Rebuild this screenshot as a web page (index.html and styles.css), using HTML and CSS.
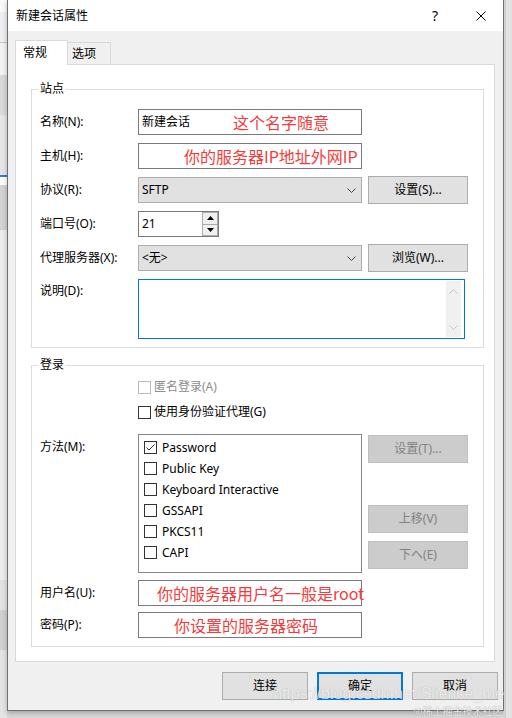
FILE: index.html
```html
<!DOCTYPE html>
<html lang="zh-CN">
<head>
<meta charset="utf-8">
<title>新建会话属性</title>
<link rel="stylesheet" href="styles.css">
</head>
<body>
<div class="screen">
  <div class="bg-left">
    <div class="band b1"></div>
    <div class="band b2"></div>
    <div class="band b3"></div>
    <div class="band b4"></div>
    <div class="band b5"></div>
    <div class="band b6"></div>
    <div class="band b7"></div>
    <div class="band b8"></div>
    <div class="band b9"></div>
    <div class="band b10"></div>
    <div class="band b11"></div>
    <div class="band b12"></div>
    <div class="band b13"></div>
  </div>

  <div class="dialog">
    <div class="titlebar">
      <span class="title">新建会话属性</span>
      <span class="help">?</span>
      <span class="close"><svg width="10" height="10" viewBox="0 0 10 10"><path d="M0.5 0.5L9.5 9.5M9.5 0.5L0.5 9.5" stroke="#000" stroke-width="1" fill="none"/></svg></span>
    </div>

    <div class="body">
      <div class="tabs">
        <div class="tab active">常规</div>
        <div class="tab">选项</div>
      </div>

      <div class="panel">
        <fieldset class="group group-site">
          <legend>站点</legend>
          <div class="row">
            <span class="label">名称(N):</span>
            <div class="field"><span class="val">新建会话</span><span class="note note-name">这个名字随意</span></div>
          </div>
          <div class="row">
            <span class="label">主机(H):</span>
            <div class="field"><span class="note note-host">你的服务器IP地址外网IP</span></div>
          </div>
          <div class="row">
            <span class="label">协议(R):</span>
            <div class="select"><span>SFTP</span><svg width="9" height="5" viewBox="0 0 9 5"><path d="M0.5 0.5L4.5 4.5L8.5 0.5" stroke="#444" fill="none"/></svg></div>
            <div class="btn">设置(S)...</div>
          </div>
          <div class="row">
            <span class="label">端口号(O):</span>
            <div class="spin">
              <span class="val">21</span>
              <div class="spin-btns">
                <div class="sb"><svg width="7" height="4" viewBox="0 0 7 4"><polygon points="0,4 3.5,0 7,4" fill="#000"/></svg></div>
                <div class="sb"><svg width="7" height="4" viewBox="0 0 7 4"><polygon points="0,0 7,0 3.5,4" fill="#000"/></svg></div>
              </div>
            </div>
          </div>
          <div class="row">
            <span class="label">代理服务器(X):</span>
            <div class="select"><span>&lt;无&gt;</span><svg width="9" height="5" viewBox="0 0 9 5"><path d="M0.5 0.5L4.5 4.5L8.5 0.5" stroke="#444" fill="none"/></svg></div>
            <div class="btn">浏览(W)...</div>
          </div>
          <div class="row row-top last">
            <span class="label label-top">说明(D):</span>
            <div class="memo">
              <div class="vscroll">
                <svg width="9" height="5" viewBox="0 0 9 5"><path d="M0.5 4.5L4.5 0.5L8.5 4.5" stroke="#c4c4c4" fill="none"/></svg>
                <svg width="9" height="5" viewBox="0 0 9 5"><path d="M0.5 0.5L4.5 4.5L8.5 0.5" stroke="#c4c4c4" fill="none"/></svg>
              </div>
            </div>
          </div>
        </fieldset>

        <fieldset class="group group-login">
          <legend>登录</legend>
          <div class="check-row">
            <span class="cb cb-dis"></span><span class="dis-text">匿名登录(A)</span>
          </div>
          <div class="check-row check-row-2">
            <span class="cb"></span><span>使用身份验证代理(G)</span>
          </div>
          <div class="row-method">
            <span class="label label-method">方法(M):</span>
            <div class="listbox">
              <div class="item"><span class="cb"><svg width="11" height="11" viewBox="0 0 11 11"><path d="M1.5 5.5L4 8L9.5 2.5" stroke="#333" stroke-width="1" fill="none"/></svg></span><span>Password</span></div>
              <div class="item"><span class="cb"></span><span>Public Key</span></div>
              <div class="item"><span class="cb"></span><span>Keyboard Interactive</span></div>
              <div class="item"><span class="cb"></span><span>GSSAPI</span></div>
              <div class="item"><span class="cb"></span><span>PKCS11</span></div>
              <div class="item"><span class="cb"></span><span>CAPI</span></div>
            </div>
            <div class="side-btns">
              <div class="btn btn-dis">设置(T)...</div>
              <div class="btn btn-dis btn-up">上移(V)</div>
              <div class="btn btn-dis btn-down">下へ(E)</div>
            </div>
          </div>
          <div class="row row-user">
            <span class="label">用户名(U):</span>
            <div class="field"><span class="note note-user">你的服务器用户名一般是root</span></div>
          </div>
          <div class="row last">
            <span class="label">密码(P):</span>
            <div class="field"><span class="note note-pass">你设置的服务器密码</span></div>
          </div>
        </fieldset>
      </div>

      <div class="footer">
        <div class="fbtn">连接</div>
        <div class="fbtn primary">确定</div>
        <div class="fbtn">取消</div>
      </div>
    </div>
  </div>

  <div class="bg-right"></div>

  <div class="watermark">https://blog.csdn.net/Slience_me</div>
  <div class="watermark2">@稀土掘金技术社区</div>
</div>
</body>
</html>
```

FILE: styles.css
```css
* { box-sizing: border-box; }
html, body { margin: 0; padding: 0; }
body {
  width: 512px;
  height: 718px;
  overflow: hidden;
  background: #dcdcdc;
  font-family: "Noto Sans", "Noto Sans CJK SC", sans-serif;
  font-size: 12px;
  line-height: 16px;
  color: #000;
}
.screen {
  position: relative;
  display: flex;
  align-items: flex-start;
  width: 512px;
  height: 718px;
  background: #d8d8d8;
}

/* background window on the left */
.bg-left { width: 7px; height: 718px; flex: none; display: flex; flex-direction: column; }
.band { flex: none; }
.b1 { height: 12px; background: #f9f9f9; }
.b2 { height: 30px; background: #efeff2; }
.b3 { height: 1px; background: #c6c6c6; }
.b4 { height: 32px; background: #f3f3f3; }
.b5 { height: 40px; background: #d9d9d9; }
.b6 { height: 60px; background: #e6e6e6; }
.b7 { height: 2px; background: #2b7fd4; }
.b8 { height: 8px; background: #ffffff; }
.b9 { height: 45px; background: #d3d3d3; }
.b10 { height: 350px; background: #ededed; }
.b11 { height: 30px; background: #e2e2e2; }
.b12 { height: 40px; background: #d0d0d0; }
.b13 { height: 68px; background: #e4e4e4; }

.bg-right { flex: 1; height: 718px; background: #e2e2e2; border-left: 2px solid #d0d0d0; }

/* dialog */
.dialog {
  width: 497px;
  height: 711px;
  flex: none;
  border: 1px solid #707070;
  border-top: none;
  background: #f0f0f0;
  display: flex;
  flex-direction: column;
  box-shadow: 0 2px 5px rgba(0, 0, 0, 0.25);
}
.titlebar {
  height: 31px;
  flex: none;
  background: #fff;
  display: flex;
  align-items: center;
  padding-left: 8px;
}
.title { flex: 1; font-size: 12px; }
.help { width: 46px; text-align: center; font-size: 14px; }
.close { width: 45px; display: flex; justify-content: center; align-items: center; }

.body {
  flex: 1;
  display: flex;
  flex-direction: column;
  padding: 9px 5px 10px 7px;
}
.tabs {
  height: 24px;
  display: flex;
  align-items: flex-end;
  flex: none;
}
.tab {
  height: 22px;
  width: 44px;
  margin-left: -1px;
  padding-left: 4px;
  border: 1px solid #d9d9d9;
  border-bottom: none;
  background: #f0f0f0;
  display: flex;
  align-items: center;
}
.tab.active {
  position: relative;
  z-index: 1;
  width: 53px;
  height: 25px;
  margin-left: 0;
  margin-bottom: -1px;
  padding-left: 7px;
  padding-bottom: 1px;
  background: #fff;
}
.panel {
  width: 480px;
  height: 598px;
  flex: none;
  border: 1px solid #d9d9d9;
  background: #fff;
  padding: 0 10px 0 15px;
}

.group {
  margin: 16px 0 0 0;
  border: 1px solid #dcdcdc;
  padding: 12px 0 8px 8px;
  min-width: 0;
}
.group-login { margin-top: 9px; padding-top: 4px; }
.group legend {
  padding: 0 2px;
  margin-left: -2px;
  line-height: 16px;
  height: 16px;
}

.row { display: flex; align-items: center; height: 26px; margin-bottom: 8px; }
.row.last { margin-bottom: 0; }
.row-user { margin-bottom: 6px; }
.label { width: 98px; flex: none; }
.row-top { align-items: flex-start; height: auto; }
.label-top { margin-top: 4px; }

.field {
  width: 224px;
  height: 26px;
  flex: none;
  border: 1px solid #7a7a7a;
  background: #fff;
  display: flex;
  align-items: center;
  padding-left: 3px;
  white-space: nowrap;
}
.note {
  color: #f33b3b;
  font-family: "Noto Sans CJK SC", sans-serif;
  font-size: 16px;
  line-height: 20px;
}
.note-name { margin-left: 43px; }
.note-host { margin-left: 42px; }
.note-user { margin-left: 15px; }
.note-pass { margin-left: 32px; }

.select {
  width: 224px;
  height: 26px;
  flex: none;
  border: 1px solid #adadad;
  background: #e1e1e1;
  display: flex;
  align-items: center;
  justify-content: space-between;
  padding: 0 5px 0 3px;
}
.btn {
  width: 100px;
  height: 28px;
  flex: none;
  margin-left: 6px;
  border: 1px solid #adadad;
  background: #e1e1e1;
  display: flex;
  align-items: center;
  justify-content: center;
}
.spin {
  width: 81px;
  height: 26px;
  flex: none;
  border: 1px solid #7a7a7a;
  background: #fff;
  display: flex;
  align-items: center;
  padding-left: 3px;
}
.spin-btns {
  margin-left: auto;
  width: 16px;
  height: 24px;
  display: flex;
  flex-direction: column;
}
.sb {
  flex: 1;
  border: 1px solid #adadad;
  background: #f0f0f0;
  display: flex;
  align-items: center;
  justify-content: center;
}
.sb + .sb { border-top: none; }

.memo {
  width: 327px;
  height: 60px;
  flex: none;
  border: 1px solid #0078d7;
  background: #fff;
  padding: 1px 3px 1px 1px;
  display: flex;
  justify-content: flex-end;
}
.vscroll {
  width: 15px;
  background: #f0f0f0;
  display: flex;
  flex-direction: column;
  justify-content: space-between;
  align-items: center;
  padding: 8px 0 7px;
}

.check-row { display: flex; align-items: center; height: 20px; padding-left: 98px; margin-bottom: 5px; }
.check-row-2 { margin-bottom: 12px; }
.cb {
  width: 13px;
  height: 13px;
  flex: none;
  border: 1px solid #333;
  background: #fff;
  margin-right: 3px;
  display: flex;
  align-items: center;
  justify-content: center;
}
.cb-dis { border-color: #bcbcbc; }
.dis-text { color: #8d8d8d; }

.row-method { display: flex; align-items: flex-start; margin-bottom: 7px; }
.label-method { margin-top: 5px; }
.listbox {
  width: 224px;
  height: 139px;
  flex: none;
  border: 1px solid #828790;
  background: #fff;
  padding: 2px 0 0 5px;
}
.item { display: flex; align-items: center; height: 21px; }
.item .cb { margin-right: 5px; }
.side-btns { display: flex; flex-direction: column; margin-left: 6px; padding-top: 1px; }
.btn-dis {
  margin-left: 0;
  background: #cccccc;
  border-color: #bfbfbf;
  color: #838383;
}
.btn-up { margin-top: 42px; }
.btn-down { margin-top: 8px; }

.footer {
  display: flex;
  justify-content: flex-end;
  gap: 9px;
  margin-top: 10px;
  height: 28px;
  flex: none;
}
.fbtn {
  width: 86px;
  height: 28px;
  border: 1px solid #adadad;
  background: #e1e1e1;
  display: flex;
  align-items: center;
  justify-content: center;
}
.fbtn.primary { border: 2px solid #0078d7; }

.watermark {
  position: absolute;
  left: 273px;
  top: 685px;
  font-family: "Liberation Sans", sans-serif;
  font-size: 16px;
  line-height: 18px;
  color: rgba(255, 255, 255, 0.8);
  text-shadow: 0 0 1px rgba(0, 0, 0, 0.3);
  white-space: nowrap;
}
.watermark2 {
  position: absolute;
  left: 413px;
  top: 705px;
  font-family: "Noto Sans CJK SC", sans-serif;
  font-size: 10px;
  line-height: 12px;
  color: rgba(255, 255, 255, 0.85);
  text-shadow: 0 0 1px rgba(0, 0, 0, 0.4);
  white-space: nowrap;
}
```
